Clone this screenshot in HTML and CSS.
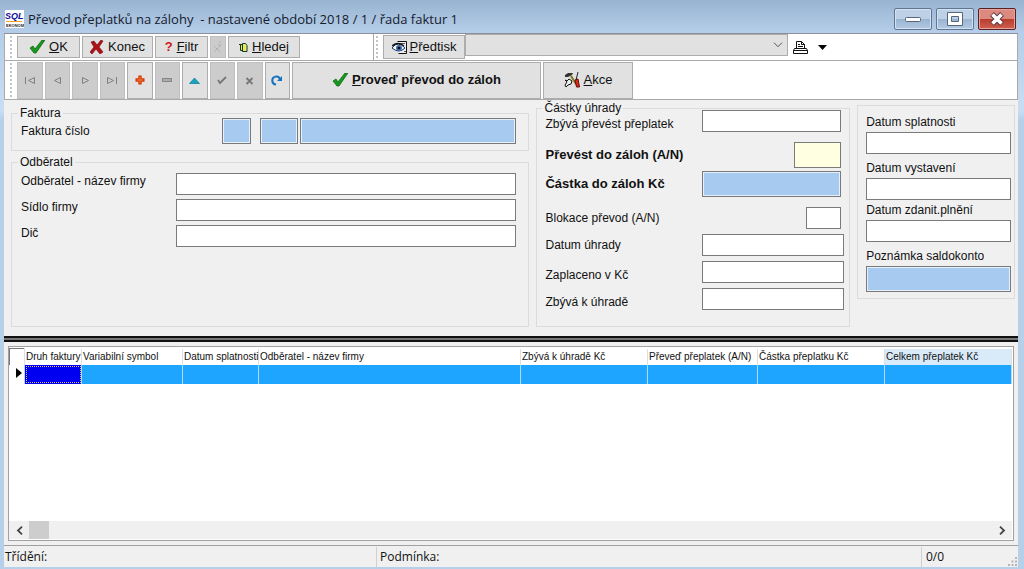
FILE: index.html
```html
<!DOCTYPE html>
<html lang="cs">
<head>
<meta charset="utf-8">
<title>Převod přeplatků na zálohy</title>
<link rel="stylesheet" href="styles.css">
</head>
<body>
<div class="window">
  <header class="titlebar">
    <svg class="app-icon" width="19" height="18" viewBox="0 0 19 18" aria-hidden="true">
      <rect width="19" height="18" fill="#fff"/>
      <text x="0" y="9" class="icon-sql">SQL</text>
      <path d="M1 11.500h16" stroke="#f5a020"/>
      <text x="1" y="17" class="icon-eko">EKONOM</text>
    </svg>
    <h1 class="title">Převod přeplatků na zálohy&nbsp; - nastavené období 2018 / 1 / řada faktur 1</h1>
    <button class="win-btn" aria-label="Minimalizovat"><svg width="16" height="14" viewBox="0 0 16 14"><rect x="0.500" y="5.500" width="15" height="4" rx="1" fill="#fff" stroke="#56667a"/></svg></button>
    <button class="win-btn" aria-label="Maximalizovat"><svg width="16" height="14" viewBox="0 0 16 14"><path fill-rule="evenodd" d="M.5.5h15v13H.5zM4.500 4.500v5h7v-5z" fill="#fff" stroke="#56667a"/></svg></button>
    <button class="win-btn win-close" aria-label="Zavřít"><svg width="18" height="14" viewBox="0 0 18 14"><path d="M4 2l10 10M14 2L4 12" stroke="#5b3a40" stroke-width="5.500"/><path d="M4.500 2.500l9 9M13.500 2.500l-9 9" stroke="#fff" stroke-width="3.600"/></svg></button>
  </header>

  <main class="client">
    <div class="toolbar toolbar-top">
      <span class="grip"></span>
      <button class="btn btn-ok"><svg width="16" height="14" viewBox="0 0 16 14"><path d="M1 8l3-2 2 3 7-9 3 0-9 13H5z" fill="#169a1c" stroke="#0b5a10" stroke-width=".7"/></svg><span><u>O</u>K</span></button>
      <button class="btn btn-end"><svg width="14" height="14" viewBox="0 0 14 14"><path d="M1 2l3-1 3 4 4-5 2 1-4 6 4 5-3 2-4-5-4 5-2-2 4-5z" fill="#b01218" stroke="#6c0508" stroke-width=".6"/></svg><span>Konec</span></button>
      <button class="btn btn-filter"><span class="red">?</span><span><u>F</u>iltr</span></button>
      <button class="btn btn-small" disabled aria-label="Zrušit filtr"><svg width="10" height="12" viewBox="0 0 10 12"><path d="M6 1h3M5 3l2 2 2-2M1 5l6 6M7 5l-6 6" fill="none" stroke="#aaa" stroke-dasharray="2 1"/></svg></button>
      <button class="btn btn-find"><svg width="9" height="10" viewBox="0 0 9 10"><path d="M1.500 2.500h3v6h-3z" fill="#e7ef58" stroke="#15352b"/><path d="M3.500 1.500h3l1.500 2v6H3.500z" fill="#e7ef58" stroke="#15352b"/><path d="M0 2.500h3" stroke="#15352b"/></svg><span><u>H</u>ledej</span></button>
      <span class="divider"></span>
      <span class="grip"></span>
      <button class="btn btn-print"><svg width="16" height="15" viewBox="0 0 16 15"><path d="M5.500 1.500h9v12h-8" fill="#eee" stroke="#111"/><path d="M7 3.500h6M12 11.500h2" stroke="#555"/><path d="M0 8q6-8 13 0-6 6-13 0z" fill="#fff" stroke="#17315f"/><path d="M0 6q6-5 12 0" fill="none" stroke="#111" stroke-width="1.500"/><circle cx="7" cy="8" r="3" fill="#3b6cae"/><circle cx="7" cy="8" r="1.300"/></svg><span><u>P</u>ředtisk</span></button>
      <select class="report" aria-label="Předtisk"><option></option></select>
      <button class="plain printer" aria-label="Tisk"><svg width="15" height="15" viewBox="0 0 15 15"><path d="M3.500 8.500v-7h5l3 3v4z" fill="#fff" stroke="#111"/><path d="M8.500 1.500v3h3M5 4.500h2M5 6.500h5" fill="none" stroke="#111"/><path d="M1.500 8.500h12l1 2v3H.5v-3zM.5 10.500h14" fill="#fff" stroke="#111"/></svg></button>
      <button class="plain" aria-label="Možnosti tisku"><svg width="9" height="5" viewBox="0 0 9 5"><path d="M0 0h9L4.500 5z"/></svg></button>
    </div>

    <div class="toolbar toolbar-main">
      <span class="grip"></span>
      <div class="nav">
        <button class="btn" disabled aria-label="První"><svg width="12" height="9" viewBox="0 0 12 9"><path d="M1.500 1v7M10.500 1.500v6l-6-3z" fill="none" stroke="#808080"/></svg></button>
        <button class="btn" disabled aria-label="Předchozí"><svg width="12" height="9" viewBox="0 0 12 9"><path d="M9.500 1.500v6l-6-3z" fill="none" stroke="#808080"/></svg></button>
        <button class="btn" disabled aria-label="Další"><svg width="12" height="9" viewBox="0 0 12 9"><path d="M3.500 1.500v6l6-3z" fill="none" stroke="#808080"/></svg></button>
        <button class="btn" disabled aria-label="Poslední"><svg width="12" height="9" viewBox="0 0 12 9"><path d="M10.500 1v7M1.500 1.500v6l6-3z" fill="none" stroke="#808080"/></svg></button>
        <button class="btn" aria-label="Přidat"><svg width="10" height="10" viewBox="0 0 10 10"><path d="M5 .5v9M.5 5h9" stroke="#d53a08" stroke-width="3.400"/><path d="M5 2v6M2 5h6" stroke="#f47a35"/></svg></button>
        <button class="btn" disabled aria-label="Smazat"><svg width="10" height="9" viewBox="0 0 10 9"><rect x=".5" y="2.500" width="9" height="3" fill="#aaa" stroke="#888"/></svg></button>
        <button class="btn" aria-label="Upravit"><svg width="11" height="9" viewBox="0 0 11 9"><path d="M5.500 2l5 5.500H.5z" fill="#16a5bd" stroke="#087a96" stroke-width=".7"/></svg></button>
        <button class="btn" disabled aria-label="Uložit"><svg width="10" height="9" viewBox="0 0 10 9"><path d="M1 4l2 3 6-6" fill="none" stroke="#777" stroke-width="1.800"/></svg></button>
        <button class="btn" disabled aria-label="Storno"><svg width="9" height="9" viewBox="0 0 9 9"><path d="M1.500 2l6 6M7.500 2l-6 6" stroke="#777" stroke-width="1.800"/></svg></button>
        <button class="btn" aria-label="Obnovit"><svg width="12" height="11" viewBox="0 0 12 11"><path d="M5 9.500A4 4 0 1 1 9 4" fill="none" stroke="#1a74bd" stroke-width="2"/><path d="M11 1v5H6z" fill="#1a74bd"/></svg></button>
      </div>
      <button class="btn btn-run"><svg width="16" height="14" viewBox="0 0 16 14"><path d="M1 8l3-2 2 3 7-9 3 0-9 13H5z" fill="#169a1c" stroke="#0b5a10" stroke-width=".7"/></svg><span><u>P</u>roveď převod do záloh</span></button>
      <button class="btn btn-action"><svg width="16" height="16" viewBox="0 0 16 16"><path d="M1 3l3-2h5l-1 2-4 2H1z" fill="#333"/><path d="M7 4l5 8" stroke="#7b7b20" stroke-width="2"/><path d="M1 8l2 1 2-2 3 2-1 3-3 1-2 2-1-2 2-3z" fill="#eee" stroke="#111"/><path d="M14 0l-2 8" stroke="#222"/><path d="M11 8l3-1 1.500 8h-3z" fill="#d7281c" stroke="#6b0905"/></svg><span><u>A</u>kce</span></button>
    </div>

    <form class="form">
      <div class="form-left">
        <fieldset class="box invoice">
          <legend>Faktura</legend>
          <div class="row">
            <label for="num1" class="label-num">Faktura číslo</label>
            <input id="num1" class="key w-29">
            <input class="key w-38 spaced" aria-label="Faktura číslo, rok">
            <input class="key grow" aria-label="Faktura číslo, pořadí">
          </div>
        </fieldset>
        <fieldset class="box customer">
          <legend>Odběratel</legend>
          <div class="row top"><label for="firm">Odběratel - název firmy</label><input id="firm" class="grow"></div>
          <div class="row top"><label for="addr">Sídlo firmy</label><input id="addr" class="grow"></div>
          <div class="row top"><label for="dic">Dič</label><input id="dic" class="grow"></div>
        </fieldset>
      </div>

      <fieldset class="box amounts">
        <legend>Částky úhrady</legend>
        <div class="row end"><label for="rest">Zbývá převést přeplatek</label><input id="rest" class="w-139"></div>
        <div class="row gap-l"><label for="move" class="bold">Převést do záloh (A/N)</label><input id="move" class="flag w-47"></div>
        <div class="row"><label for="sum" class="bold">Částka do záloh Kč</label><input id="sum" class="key w-139"></div>
        <div class="row gap-l"><label for="block">Blokace převod (A/N)</label><input id="block" class="w-35"></div>
        <div class="row wide gap-s"><label for="paid-on">Datum úhrady</label><input id="paid-on" class="w-142"></div>
        <div class="row wide end gap-s"><label for="paid">Zaplaceno v Kč</label><input id="paid" class="w-142"></div>
        <div class="row wide end gap-s"><label for="due">Zbývá k úhradě</label><input id="due" class="w-142"></div>
      </fieldset>

      <div class="box dates">
        <label for="d1">Datum splatnosti</label><input id="d1">
        <label for="d2" class="next">Datum vystavení</label><input id="d2">
        <label for="d3">Datum zdanit.plnění</label><input id="d3">
        <label for="note" class="next">Poznámka saldokonto</label><input id="note" class="key">
      </div>
    </form>

    <div class="splitter"></div>

    <section class="grid-panel">
      <div class="grid-box">
        <table class="data">
          <colgroup><col class="c-mark"><col class="c-kind"><col class="c-sym"><col class="c-date"><col><col class="c-due"><col class="c-move"><col class="c-sum"><col class="c-sum"></colgroup>
          <thead>
            <tr><th class="corner"></th><th>Druh faktury</th><th>Variabilní symbol</th><th>Datum splatnosti</th><th>Odběratel - název firmy</th><th>Zbývá k úhradě Kč</th><th>Převeď přeplatek (A/N)</th><th>Částka přeplatku Kč</th><th class="sorted">Celkem přeplatek Kč</th></tr>
          </thead>
          <tbody>
            <tr><td class="mark"><svg width="6" height="10" viewBox="0 0 6 10"><path d="M0 0l6 5-6 5z"/></svg></td><td class="focus"></td><td></td><td></td><td></td><td></td><td></td><td></td><td></td></tr>
          </tbody>
        </table>
        <div class="scroll">
          <button class="scroll-btn" aria-label="Posunout vlevo"><svg width="7" height="9" viewBox="0 0 7 9"><path d="M6 .7L2 4.500l4 3.800" fill="none" stroke="#444" stroke-width="1.800"/></svg></button>
          <div class="track"><div class="thumb"></div></div>
          <button class="scroll-btn" aria-label="Posunout vpravo"><svg width="7" height="9" viewBox="0 0 7 9"><path d="M1 .7l4 3.800-4 3.800" fill="none" stroke="#444" stroke-width="1.800"/></svg></button>
        </div>
      </div>
    </section>

    <footer class="status">
      <span class="s-sort">Třídění:</span>
      <span class="s-cond">Podmínka:</span>
      <span class="s-count">0/0</span>
      <svg class="resize" width="10" height="10" viewBox="0 0 10 10" aria-hidden="true"><path d="M7 0h2v2H7zM3.500 3.500h2v2h-2zM7 3.500h2v2H7zM0 7h2v2H0zM3.500 7h2v2h-2zM7 7h2v2H7z" fill="#b5b5b5"/></svg>
    </footer>
  </main>
</div>
</body>
</html>
```
FILE: styles.css
```css
* { box-sizing: border-box; }

body {
  margin: 0;
  font: 12px/16px "Liberation Sans", Arial, sans-serif;
  color: #111;
}

button, input, select { font: inherit; color: inherit; margin: 0; }

.window {
  min-height: 100vh;
  display: flex;
  flex-direction: column;
  padding: 0 6px 2px 4px;
  background: linear-gradient(#98b4d2, #b5cde8 32px, #c9def2 110px, #b7d0ea 120px);
}

/* Title bar */
.titlebar {
  display: flex;
  align-items: center;
  gap: 4px;
  height: 33px;
  padding: 4px 2px 0 1px;
}
.icon-sql { font: italic bold 9px "Liberation Sans", sans-serif; fill: #10109a; }
.icon-eko { font: bold 4px "Liberation Sans", sans-serif; fill: #222; }
.title {
  flex: 1;
  margin: 0;
  font: 13px/20px "Open Sans", sans-serif;
  color: #14202e;
}
.win-btn {
  width: 38px;
  height: 22px;
  padding: 0;
  display: flex;
  align-items: center;
  justify-content: center;
  border: 1px solid #60758f;
  border-radius: 2px;
  box-shadow: inset 0 0 0 1px #d3e2f2;
  background: linear-gradient(#bcd0e6 50%, #9ab4d1 50%, #b2c9e2);
}
.win-close {
  border-color: #5a1f22;
  box-shadow: inset 0 0 0 1px #e3a59d;
  background: linear-gradient(#dc8a80 50%, #bb3b2c 50%, #cf6050);
}

/* Client area */
.client {
  flex: 1;
  display: flex;
  flex-direction: column;
  background: #f0f0f0;
  border-top: 1px solid #8c9199;
}

/* Toolbars */
.toolbar {
  display: flex;
  align-items: center;
  gap: 2px;
  padding: 0 5px;
  background: #fff;
  border: 1px solid #aaa;
  border-top: 0;
}
.toolbar-top { height: 27px; }
.toolbar-main { height: 39px; }
.grip {
  width: 2px;
  align-self: stretch;
  margin: 2px 3px 2px 0;
  background: repeating-linear-gradient(#c4c4c4 0 2px, #fff 2px 4px);
}
.divider {
  width: 1px;
  align-self: stretch;
  margin-left: 71px;
  background: #aaa;
}
.btn {
  display: flex;
  align-items: center;
  justify-content: center;
  gap: 4px;
  height: 22px;
  padding: 0;
  border: 1px solid #adadad;
  background: #e1e1e1;
  font-size: 13px;
}
.btn:disabled { background: #cccccc; border-color: #bfbfbf; }
.btn-ok { width: 63px; }
.btn-end { width: 71px; }
.btn-filter { width: 53px; }
.btn-small { width: 16px; }
.btn-find { width: 72px; }
.btn-print { width: 82px; height: 24px; gap: 2px; }
.red { color: #d01818; font-weight: bold; }
.report {
  width: 323px;
  height: 22px;
  align-self: flex-start;
  margin-left: -2px;
  border: 1px solid #adadad;
  border-radius: 0;
  appearance: none;
  background: #e1e1e1 url("data:image/svg+xml,%3Csvg xmlns='http://www.w3.org/2000/svg' width='10' height='6'%3E%3Cpath d='M1 .7l4 4 4-4' fill='none' stroke='%23555'/%3E%3C/svg%3E") no-repeat right 4px center;
}
.plain {
  display: flex;
  padding: 0;
  border: 0;
  background: none;
}
.printer { margin: 0 8px 0 3px; }

.nav {
  display: grid;
  grid-template-columns: repeat(10, 1fr);
  gap: 2px;
  width: 273px;
}
.toolbar-main .btn { height: 37px; }
.btn-run { width: 249px; }
.btn-action { width: 90px; }
.btn-run, .bold { font-size: 13px; font-weight: bold; }

/* Form */
.form {
  display: grid;
  grid-template-columns: 519fr 314fr 158fr;
  gap: 7px;
  align-items: start;
  padding: 5px 3px 9px 7px;
}
.form-left { display: grid; gap: 10px; padding-top: 7px; }
.box {
  min-width: 0;
  margin: 0;
  border: 1px solid #dcdcdc;
}
.box legend {
  margin-left: -3px;
  padding: 0 2px;
  line-height: 2px;
}
.invoice { padding: 4px 12px 6px 9px; }
.customer { min-height: 166px; padding: 10px 12px 10px 9px; }
.row {
  display: flex;
  align-items: center;
  gap: 2px;
}
.row.top { align-items: flex-start; }
.row.end { align-items: flex-end; }
.row label { flex: none; }
.customer label { width: 153px; }
.customer .row + .row { margin-top: 4px; }
.label-num { width: 199px; }

input {
  height: 22px;
  min-width: 0;
  padding: 0 3px;
  border: 1px solid #7a7a7a;
  border-radius: 0;
  background: #fff;
}
input.key {
  height: 26px;
  background: #a6caf0;
  box-shadow: inset 0 0 0 1px #e6f0fa;
}
input.flag { height: 26px; background: #ffffe1; }
.grow { flex: 1; }
.spaced { margin-left: 7px; }
.w-29 { width: 29px; }
.w-35 { width: 35px; }
.w-38 { width: 38px; }
.w-47 { width: 47px; }
.w-139 { width: 139px; }
.w-142 { width: 142px; }

.amounts {
  min-height: 220px;
  margin-top: 2px;
  padding: 1px 8px 13px 8px;
}
.amounts .row { justify-content: space-between; margin-bottom: 3px; }
.amounts .row.wide { margin-right: -3px; }
.amounts .row.gap-s { margin-top: 5px; }
.amounts .row.gap-l { margin-top: 10px; }

.dates {
  display: grid;
  gap: 2px;
  padding: 8px 3px 6px 8px;
}
.dates .next { margin-top: 4px; }
.dates input { width: 100%; }

.splitter {
  height: 6px;
  border: solid #111;
  border-width: 2px 0;
  background: #777;
}

/* Data grid */
.grid-panel {
  flex: 1;
  display: flex;
  padding: 4px;
}
.grid-box {
  flex: 1;
  display: flex;
  flex-direction: column;
  border: 1px solid #a0a0a0;
  background: #fff;
  padding: 1px 1px 1px 0;
}
.data {
  width: 100%;
  table-layout: fixed;
  border-collapse: collapse;
  font-size: 10px;
  line-height: 14px;
}
.c-mark { width: 15px; }
.c-kind { width: 57px; }
.c-sym { width: 101px; }
.c-date { width: 76px; }
.c-due { width: 127px; }
.c-move { width: 110px; }
.c-sum { width: 127px; }
.data th {
  height: 16px;
  padding: 0 0 0 1px;
  text-align: left;
  font-weight: normal;
  white-space: nowrap;
  border-right: 1px solid #dedede;
}
.data .corner { border-top: 1px solid #777; border-left: 1px solid #777; }
.data .sorted { background: #d9ebf9; }
.data td {
  height: 19px;
  padding: 0;
  background: #1ea5ff;
  border-right: 1px solid #a9dcff;
}
.data .mark { background: #fff; padding-right: 2px; text-align: right; line-height: 10px; }
.data .focus { background: #0000f0; outline: 1px dotted #d8c060; outline-offset: -2px; }

.scroll {
  display: flex;
  height: 18px;
  margin-top: auto;
  background: #f0f0f0;
}
.scroll-btn {
  display: flex;
  align-items: center;
  justify-content: center;
  width: 20px;
  padding: 0;
  border: 0;
  background: none;
}
.track { flex: 1; display: flex; }
.thumb { width: 20px; background: #cdcdcd; }

/* Status bar */
.status {
  display: flex;
  align-items: center;
  height: 22px;
  border-top: 1px solid #a0a0a0;
  font: 12px/20px "Open Sans", sans-serif;
}
.s-sort { width: 372px; padding-left: 1px; }
.s-cond { flex: 1; padding-left: 3px; border-left: 1px solid #d0d0d0; }
.s-count { width: 87px; padding-left: 4px; border-left: 1px solid #d0d0d0; }
.resize { align-self: flex-end; }
```
